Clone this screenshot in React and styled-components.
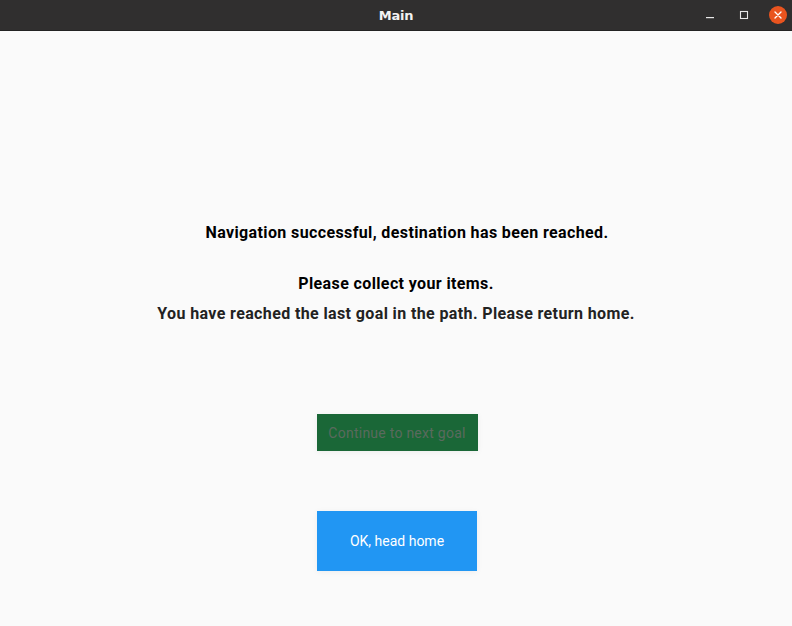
import React from "react";
import styled, { createGlobalStyle } from "styled-components";

const GlobalStyle = createGlobalStyle`
  html, body {
    margin: 0;
    padding: 0;
    height: 100%;
    background: #fafafa;
  }
  #root {
    height: 100%;
  }
`;

// Window frame
const Window = styled.div`
  height: 626px;
  display: flex;
  flex-direction: column;
  background: #fafafa;
  font-family: Roboto, "Liberation Sans", sans-serif;
`;

// Title bar
const TitleBar = styled.div`
  height: 30px;
  flex-shrink: 0;
  background: #302f2f;
  border-bottom: 1px solid #232323;
  display: grid;
  grid-template-columns: 1fr auto 1fr;
  align-items: center;
`;

const Title = styled.div`
  grid-column: 2;
  color: #f2f2f2;
  font-family: "DejaVu Sans", sans-serif;
  font-weight: bold;
  font-size: 13px;
  letter-spacing: -0.2px;
`;

const Controls = styled.div`
  grid-column: 3;
  justify-self: end;
  display: flex;
  align-items: center;
  gap: 16px;
  padding-right: 5px;
`;

const ControlButton = styled.div`
  width: 18px;
  height: 18px;
  display: flex;
  align-items: center;
  justify-content: center;
  border-radius: 50%;
  background: ${(p) => (p.$close ? "#e9541f" : "transparent")};
`;

// Page body
const Content = styled.main`
  flex: 1;
  display: flex;
  flex-direction: column;
  align-items: center;
  padding-top: 192px;
`;

const Message = styled.p`
  margin: 0;
  font-size: 16px;
  line-height: 20px;
  font-weight: 700;
  color: ${(p) => p.$color || "#000"};
  margin-top: ${(p) => p.$gap || 0}px;
  padding-left: ${(p) => p.$shift || 0}px;
  letter-spacing: 0.38px;
`;

const Button = styled.button`
  border: none;
  border-radius: 0;
  font-family: Roboto, "Liberation Sans", sans-serif;
  font-size: 14px;
  letter-spacing: ${(p) => p.$spacing || 0}px;
  width: ${(p) => p.$width}px;
  height: ${(p) => p.$height}px;
  margin-top: ${(p) => p.$gap}px;
  margin-left: 2px;
  background: ${(p) => p.$bg};
  color: ${(p) => p.$fg};
  box-shadow: 0 1px 6px rgba(0, 0, 0, 0.06);
  padding: 0;
  cursor: pointer;
`;

export default function App() {
  return (
    <>
      <GlobalStyle />
      <Window>
        <TitleBar>
          <Title>Main</Title>
          <Controls>
            <ControlButton>
              <svg width="10" height="10" viewBox="0 0 10 10">
                <rect x="1" y="7" width="8" height="1.2" fill="#e8e8e8" />
              </svg>
            </ControlButton>
            <ControlButton>
              <svg width="10" height="10" viewBox="0 0 10 10">
                <rect x="1.5" y="1.5" width="7" height="7" fill="none" stroke="#e8e8e8" strokeWidth="1.1" />
              </svg>
            </ControlButton>
            <ControlButton $close>
              <svg width="10" height="10" viewBox="0 0 10 10">
                <path d="M2 2 L8 8 M8 2 L2 8" stroke="#fff" strokeWidth="1.4" strokeLinecap="round" />
              </svg>
            </ControlButton>
          </Controls>
        </TitleBar>
        <Content>
          <Message $shift={22}>Navigation successful, destination has been reached.</Message>
          <Message $gap={31}>Please collect your items.</Message>
          <Message $gap={10} $color="#222">
            You have reached the last goal in the path. Please return home.
          </Message>
          <Button $width={161} $height={37} $gap={90} $bg="#1a6737" $fg="#5a6a5e" $spacing={0.25}>
            Continue to next goal
          </Button>
          <Button $width={160} $height={60} $gap={60} $bg="#2196f3" $fg="#fff">
            OK, head home
          </Button>
        </Content>
      </Window>
    </>
  );
}
